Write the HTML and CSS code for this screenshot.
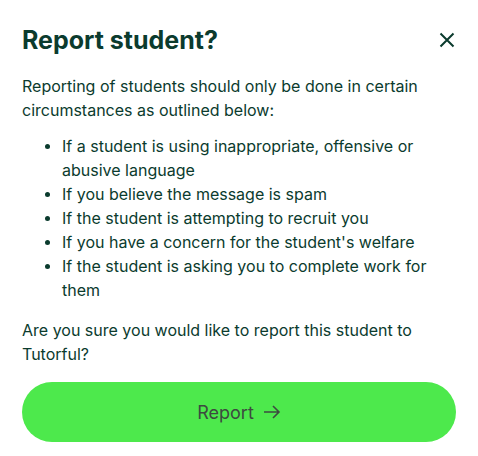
FILE: index.html
```html
<!DOCTYPE html>
<html>
<head>
    <link rel="stylesheet" href="styles.css">
</head>
<body>
    <div class="modal">
        <div class="modal-head">
            <h2>Report student?</h2>
            <button class="close" aria-label="Close">
                <svg width="16" height="16" viewBox="0 0 16 16">
                    <path d="M1.5 1.5 L14.5 14.5 M14.5 1.5 L1.5 14.5" stroke="#0b3b2e" stroke-width="2" fill="none"/>
                </svg>
            </button>
        </div>

        <p>Reporting of students should only be done in certain circumstances as outlined below:</p>

        <ul class="reasons">
            <li>If a student is using inappropriate, offensive or abusive language</li>
            <li>If you believe the message is spam</li>
            <li>If the student is attempting to recruit you</li>
            <li>If you have a concern for the student's welfare</li>
            <li>If the student is asking you to complete work for them</li>
        </ul>

        <p>Are you sure you would like to report this student to Tutorful?</p>

        <button class="report-btn">
            Report
            <svg width="18" height="14" viewBox="0 0 18 14">
                <path d="M1 7 H16 M10 1 L16 7 L10 13" stroke="#3d4a40" stroke-width="1.6" fill="none"/>
            </svg>
        </button>
    </div>
</body>
</html>
```

FILE: styles.css
```css
body {
    margin: 0;
    padding: 0;
    background-color: #fff;
    font-family: Inter, "Noto Sans", sans-serif;
    color: #0b3b2e;
}

.modal {
    padding: 22px 22px;
}

.modal-head {
    display: flex;
    justify-content: space-between;
    align-items: center;
}

.modal-head h2 {
    margin: 0;
    font-size: 25px;
    line-height: 36px;
    font-weight: 700;
}

.close {
    background: none;
    border: none;
    padding: 0;
    margin-right: 1px;
    display: flex;
}

p {
    font-size: 16px;
    line-height: 24px;
    margin: 16px 0 12px;
}

.reasons {
    font-size: 16px;
    line-height: 24px;
    margin: 0 0 16px;
    padding-left: 40px;
    list-style: none;
}

.reasons li {
    position: relative;
}

/* custom bullet, the default one sits too close to the text */
.reasons li::before {
    content: "";
    position: absolute;
    left: -17px;
    top: 10px;
    width: 5px;
    height: 5px;
    border-radius: 50%;
    background-color: #0b3b2e;
}

.report-btn {
    display: flex;
    justify-content: center;
    align-items: center;
    gap: 9px;
    width: 100%;
    height: 60px;
    margin-top: 16px;
    border: none;
    border-radius: 30px;
    background-color: #4de94c;
    color: #3d4a40;
    font-family: Inter, "Noto Sans", sans-serif;
    font-size: 18px;
}
```
